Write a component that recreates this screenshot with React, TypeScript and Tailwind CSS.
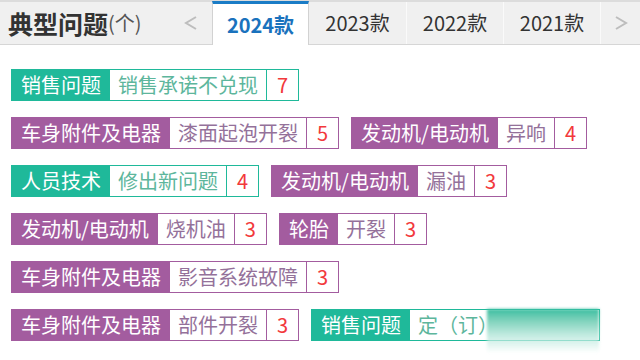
import React from 'react';

type Tone = 'teal' | 'purple';

const tones = {
  teal: {
    border: 'border-[#1fb99a]',
    bg: 'bg-[#1fb99a]',
    value: 'text-[#5db69c]',
  },
  purple: {
    border: 'border-[#a35c9f]',
    bg: 'bg-[#a35c9f]',
    value: 'text-[#94719a]',
  },
};

interface TagProps {
  tone: Tone;
  label: string;
  value: string;
  count?: number;
  blurred?: boolean;
}

function Tag({ tone, label, value, count, blurred }: TagProps) {
  const s = tones[tone];
  return (
    <div className={`relative flex h-8 shrink-0 border ${s.border} text-[20px] leading-[30px]`}>
      <span className={`flex items-center px-[9px] text-white ${s.bg}`}>{label}</span>
      <span className={`flex items-center bg-white pl-2 ${blurred ? 'pr-[101px]' : 'pr-2'} ${s.value}`}>
        {value}
      </span>
      {count !== undefined && (
        <span className={`flex items-center border-l ${s.border} bg-white px-[10px] text-[#f2393b]`}>
          {count}
        </span>
      )}
      {blurred && (
        <div className="absolute left-[175px] top-[-1px] h-[44px] w-[112px] bg-gradient-to-b from-[#34bea0] via-[#c3ebe1] via-60% to-white/0 blur-[1.5px]" />
      )}
    </div>
  );
}

const rows: TagProps[][] = [
  [{ tone: 'teal', label: '销售问题', value: '销售承诺不兑现', count: 7 }],
  [
    { tone: 'purple', label: '车身附件及电器', value: '漆面起泡开裂', count: 5 },
    { tone: 'purple', label: '发动机/电动机', value: '异响', count: 4 },
  ],
  [
    { tone: 'teal', label: '人员技术', value: '修出新问题', count: 4 },
    { tone: 'purple', label: '发动机/电动机', value: '漏油', count: 3 },
  ],
  [
    { tone: 'purple', label: '发动机/电动机', value: '烧机油', count: 3 },
    { tone: 'purple', label: '轮胎', value: '开裂', count: 3 },
  ],
  [{ tone: 'purple', label: '车身附件及电器', value: '影音系统故障', count: 3 }],
  [
    { tone: 'purple', label: '车身附件及电器', value: '部件开裂', count: 3 },
    { tone: 'teal', label: '销售问题', value: '定（订）', blurred: true },
  ],
];

function Chevron({ dir }: { dir: 'left' | 'right' }) {
  return (
    <svg width="14" height="16" viewBox="0 0 14 16" fill="none">
      <polyline
        points={dir === 'left' ? '12,2 2,8 12,14' : '2,2 12,8 2,14'}
        stroke="#bdbdbd"
        strokeWidth="2"
      />
    </svg>
  );
}

const tabs = ['2023款', '2022款', '2021款'];

export default function App() {
  return (
    <div
      className="h-[360px] w-[640px] overflow-hidden bg-white"
      style={{ fontFamily: '"Noto Sans CJK SC", "Noto Sans", sans-serif' }}
    >
      {/* Header with year tabs */}
      <div className="flex h-[45px] border-t-2 border-b border-t-[#dcdcdc] border-b-[#d6d6d6] bg-[#f0f0f0]">
        <div className="flex w-[170px] items-center pl-2 text-[#333]">
          <span className="text-[25px] font-bold leading-none">典型问题</span>
          <span className="text-[20px] leading-none text-[#555]">(个)</span>
        </div>
        <div className="flex w-[42px] items-center justify-center">
          <Chevron dir="left" />
        </div>
        <div className="relative z-10 -mt-[1px] mb-[-1px] flex w-[97px] items-center justify-center border-x border-t-[3px] border-x-[#d2d2d2] border-t-[#1a7cc6] bg-white text-[20px] font-bold text-[#1a72bd]">
          2024款
        </div>
        {tabs.map((t, i) => (
          <div
            key={t}
            className={`flex w-[97px] items-center justify-center text-[20px] text-[#333] ${i > 0 ? 'border-l border-l-[#fafafa]' : ''}`}
          >
            {t}
          </div>
        ))}
        <div className="flex flex-1 items-center justify-center border-l border-l-[#fafafa]">
          <Chevron dir="right" />
        </div>
      </div>

      {/* Problem tags */}
      <div className="flex flex-col gap-4 pl-[11px] pt-6">
        {rows.map((row, i) => (
          <div key={i} className="flex gap-3">
            {row.map((t, j) => (
              <Tag key={j} {...t} />
            ))}
          </div>
        ))}
      </div>
    </div>
  );
}
